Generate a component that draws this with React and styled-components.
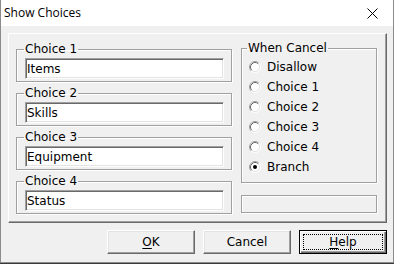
import React from "react";
import styled, { createGlobalStyle } from "styled-components";

const GlobalStyle = createGlobalStyle`
  html, body {
    margin: 0;
    padding: 0;
    background: #3a3a3a;
  }
  * {
    box-sizing: border-box;
  }
`;

const choices = ["Items", "Skills", "Equipment", "Status"];
const cancelOptions = ["Disallow", "Choice 1", "Choice 2", "Choice 3", "Choice 4", "Branch"];

const CloseIcon = () => (
  <svg width="11" height="11" viewBox="0 0 11 11">
    <path d="M0.5 0.5 L10.5 10.5 M10.5 0.5 L0.5 10.5" stroke="#000" strokeWidth="1" fill="none" />
  </svg>
);

const RadioIcon = ({ checked }) => (
  <svg width="12" height="12" viewBox="0 0 12 12">
    <circle cx="6" cy="6" r="5" fill="#fff" />
    <path d="M2.11 9.89 A5.5 5.5 0 0 1 9.89 2.11" stroke="#a0a0a0" fill="none" />
    <path d="M9.89 2.11 A5.5 5.5 0 0 1 2.11 9.89" stroke="#fff" fill="none" />
    <path d="M2.82 9.18 A4.5 4.5 0 0 1 9.18 2.82" stroke="#696969" fill="none" />
    <path d="M9.18 2.82 A4.5 4.5 0 0 1 2.82 9.18" stroke="#e3e3e3" fill="none" />
    {checked && <circle cx="6" cy="6" r="2" fill="#000" />}
  </svg>
);

const App = () => {
  return (
    <>
      <GlobalStyle />
      <Window>
        <TitleBar>
          <Title>Show Choices</Title>
          <CloseButton>
            <CloseIcon />
          </CloseButton>
        </TitleBar>
        <Body>
          <Panel>
            <LeftColumn>
              {choices.map((value, i) => (
                <Group key={i}>
                  <Legend>Choice {i + 1}</Legend>
                  <TextBox>{value}</TextBox>
                </Group>
              ))}
            </LeftColumn>
            <RightColumn>
              <Group $tight>
                <Legend>When Cancel</Legend>
                <RadioList>
                  {cancelOptions.map((label) => (
                    <RadioRow key={label}>
                      <RadioIcon checked={label === "Branch"} />
                      <span>{label}</span>
                    </RadioRow>
                  ))}
                </RadioList>
              </Group>
              <EmptyBox />
            </RightColumn>
          </Panel>
          <ButtonRow>
            <Button>
              <Face>
                <u>O</u>K
              </Face>
            </Button>
            <Button>
              <Face>Cancel</Face>
            </Button>
            <Button $default>
              <Face $focused>
                <u>H</u>elp
              </Face>
            </Button>
          </ButtonRow>
        </Body>
      </Window>
    </>
  );
};

const Window = styled.div`
  width: 394px;
  height: 263px;
  display: flex;
  flex-direction: column;
  border: 1px solid #8c8c8c;
  border-top: none;
  background: #f0f0f0;
  font-family: "DejaVu Sans", sans-serif;
  font-size: 12px;
  color: #000;
`;

const TitleBar = styled.div`
  height: 26px;
  flex-shrink: 0;
  display: flex;
  align-items: center;
  justify-content: space-between;
  background: #fff;
  padding: 0 0 0 3px;
`;

const Title = styled.span`
  font-family: "Open Sans", sans-serif;
  font-size: 12px;
  margin-top: -1px;
`;

const CloseButton = styled.div`
  width: 46px;
  height: 26px;
  display: flex;
  align-items: center;
  justify-content: center;
  margin-right: -2px;
`;

const Body = styled.div`
  flex: 1;
  padding: 7px 6px 0 7px;
  display: flex;
  flex-direction: column;
`;

const Panel = styled.div`
  height: 190px;
  display: flex;
  gap: 9px;
  padding: 8px 8px 0 7px;
  border: 1px solid;
  border-color: #fff #696969 #696969 #fff;
  box-shadow: inset -1px -1px 0 #a0a0a0;
`;

const LeftColumn = styled.div`
  width: 216px;
  display: flex;
  flex-direction: column;
  gap: 4px;
`;

const RightColumn = styled.div`
  width: 136px;
  display: flex;
  flex-direction: column;
  margin-top: -1px;
`;

const Group = styled.fieldset`
  margin: 0;
  min-width: 0;
  padding: 0 ${(p) => (p.$tight ? "6px 5px 6px" : "7px 2px 8px")};
  border: 1px solid #a0a0a0;
  box-shadow: 1px 1px 0 #fff, inset 1px 1px 0 #fff;
`;

const Legend = styled.legend`
  padding: 0 1px;
  margin-left: -1px;
  line-height: 14px;
`;

const TextBox = styled.div`
  margin-top: 2px;
  height: 21px;
  display: flex;
  align-items: center;
  padding: 0 0 0 1px;
  background: #fff;
  border: 1px solid;
  border-color: #a0a0a0 #fff #fff #a0a0a0;
  box-shadow: inset 1px 1px 0 #696969, inset -1px -1px 0 #e3e3e3;
  white-space: nowrap;
`;

const RadioList = styled.div`
  margin-top: 2px;
  display: flex;
  flex-direction: column;
`;

const RadioRow = styled.div`
  height: 20px;
  display: flex;
  align-items: center;
  gap: 6px;
  padding-left: 1px;
`;

const EmptyBox = styled.div`
  margin-top: 12px;
  height: 18px;
  border: 1px solid #a0a0a0;
  box-shadow: 1px 1px 0 #fff, inset 1px 1px 0 #fff;
`;

const ButtonRow = styled.div`
  margin-top: 7px;
  display: flex;
  justify-content: flex-end;
  gap: 8px;
`;

const Button = styled.div`
  width: 88px;
  height: 24px;
  display: flex;
  padding: 3px;
  background: #f0f0f0;
  border: 1px solid;
  border-color: ${(p) => (p.$default ? "#000" : "#fff #696969 #696969 #fff")};
  box-shadow: ${(p) =>
    p.$default
      ? "inset 1px 1px 0 #fff, inset -1px -1px 0 #696969, inset -2px -2px 0 #a0a0a0"
      : "inset -1px -1px 0 #a0a0a0, inset 1px 1px 0 #e3e3e3"};
`;

const Face = styled.span`
  flex: 1;
  display: flex;
  align-items: center;
  justify-content: center;
  border: 1px dotted ${(p) => (p.$focused ? "#000" : "transparent")};
  font-size: 12px;
  line-height: 14px;

  u {
    text-underline-offset: 2px;
  }
`;

export default App;
